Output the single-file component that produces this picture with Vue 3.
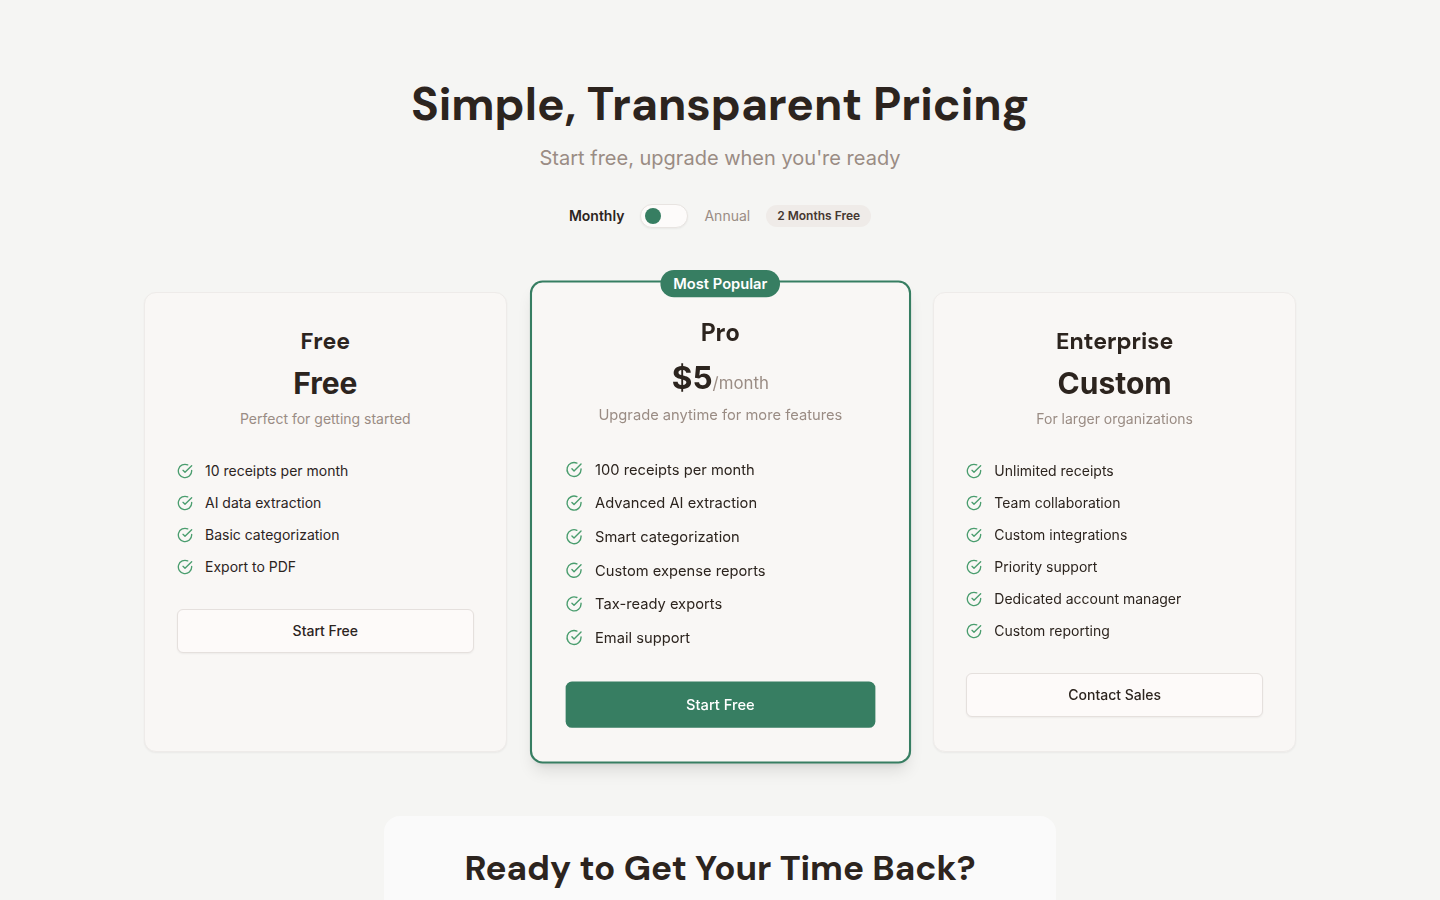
<script setup>
import { ref } from 'vue'

const annual = ref(false)

const plans = [
  {
    name: 'Free',
    price: 'Free',
    desc: 'Perfect for getting started',
    features: ['10 receipts per month', 'AI data extraction', 'Basic categorization', 'Export to PDF'],
    cta: 'Start Free',
  },
  {
    name: 'Pro',
    price: '$5',
    period: '/month',
    desc: 'Upgrade anytime for more features',
    features: [
      '100 receipts per month',
      'Advanced AI extraction',
      'Smart categorization',
      'Custom expense reports',
      'Tax-ready exports',
      'Email support',
    ],
    cta: 'Start Free',
    popular: true,
  },
  {
    name: 'Enterprise',
    price: 'Custom',
    desc: 'For larger organizations',
    features: [
      'Unlimited receipts',
      'Team collaboration',
      'Custom integrations',
      'Priority support',
      'Dedicated account manager',
      'Custom reporting',
    ],
    cta: 'Contact Sales',
  },
]
</script>

<template>
  <main class="pricing-page">
    <header class="intro">
      <h1>Simple, Transparent Pricing</h1>
      <p>Start free, upgrade when you're ready</p>
    </header>

    <div class="billing">
      <label for="billing-switch" :class="['billing-label', { active: !annual }]">Monthly</label>
      <input id="billing-switch" v-model="annual" class="switch" type="checkbox" role="switch">
      <label for="billing-switch" :class="['billing-label', { active: annual }]">Annual</label>
      <span class="saving">2 Months Free</span>
    </div>

    <section class="plans">
      <article v-for="plan in plans" :key="plan.name" :class="['plan', { popular: plan.popular }]">
        <span v-if="plan.popular" class="popular-badge">Most Popular</span>
        <div class="plan-header">
          <h3>{{ plan.name }}</h3>
          <div class="price">{{ plan.price }}<span v-if="plan.period" class="period">{{ plan.period }}</span></div>
          <p class="desc">{{ plan.desc }}</p>
        </div>
        <ul class="features">
          <li v-for="f in plan.features" :key="f">
            <svg class="check" viewBox="0 0 24 24" aria-hidden="true">
              <path d="M22 11.08V12a10 10 0 1 1-5.93-9.14" />
              <path d="m9 11 3 3L22 4" />
            </svg>
            <span>{{ f }}</span>
          </li>
        </ul>
        <button type="button" class="plan-button">{{ plan.cta }}</button>
      </article>
    </section>

    <section class="closing">
      <h2>Ready to Get Your Time Back?</h2>
    </section>
  </main>
</template>

<style>
body {
  background: #f5f5f3;
}
</style>

<style scoped>
.pricing-page {
  box-sizing: border-box;
  max-width: 1200px;
  margin: 0 auto;
  padding: 80px 24px;
  font-family: Inter, "Liberation Sans", sans-serif;
  color: #2c241e;
}

h1,
h2,
h3,
p {
  margin: 0;
}

h1,
h2,
h3 {
  font-family: "DM Sans", Inter, sans-serif;
}

.intro {
  text-align: center;
}

.intro h1 {
  font-size: 46px;
  line-height: 48px;
  font-weight: 700;
}

.intro p {
  margin-top: 16px;
  font-size: 20px;
  line-height: 28px;
  color: #9a8c84;
}

.billing {
  display: flex;
  flex-wrap: wrap;
  align-items: center;
  justify-content: center;
  gap: 16px;
  margin-top: 32px;
}

.billing-label {
  font-size: 14px;
  line-height: 20px;
  color: #9a8c84;
  cursor: pointer;
}

.billing-label.active {
  font-weight: 600;
  color: #2c241e;
}

.switch {
  appearance: none;
  box-sizing: border-box;
  display: flex;
  align-items: center;
  width: 48px;
  height: 24px;
  margin: 0;
  padding: 0 4px;
  border: 1px solid #e8e4e1;
  border-radius: 12px;
  background: #fdfbfa;
  box-shadow: 0 1px 2px rgba(0, 0, 0, 0.05);
  cursor: pointer;
}

.switch::before {
  content: "";
  width: 16px;
  height: 16px;
  border-radius: 50%;
  background: #377e62;
}

.switch:checked {
  justify-content: flex-end;
}

.saving {
  padding: 3px 11px;
  border-radius: 11px;
  background: #efebe8;
  font-size: 12px;
  line-height: 16px;
  font-weight: 600;
  color: #453730;
}

.plans {
  display: grid;
  grid-template-columns: repeat(3, minmax(0, 1fr));
  gap: 32px;
  margin-top: 64px;
}

.plan {
  position: relative;
  display: flex;
  flex-direction: column;
  padding: 32px;
  border: 1px solid #eeebe9;
  border-radius: 12px;
  background: #f9f7f5;
  box-shadow: 0 1px 2px rgba(0, 0, 0, 0.05);
}

.plan.popular {
  border: 2px solid #377e62;
  box-shadow: 0 10px 15px -3px rgba(0, 0, 0, 0.1), 0 4px 6px -4px rgba(0, 0, 0, 0.1);
  transform: scale(1.05);
}

.popular-badge {
  position: absolute;
  top: -12px;
  left: 50%;
  transform: translateX(-50%);
  padding: 3px 12px;
  border-radius: 13px;
  background: #377e62;
  font-size: 14px;
  line-height: 20px;
  font-weight: 600;
  color: #fff;
  white-space: nowrap;
}

.plan-header {
  text-align: center;
}

.plan h3 {
  font-size: 23px;
  line-height: 32px;
  font-weight: 700;
}

.price {
  margin-top: 8px;
  font-size: 30px;
  line-height: 36px;
  font-weight: 700;
}

.period {
  font-size: 16px;
  line-height: 24px;
  font-weight: 400;
  color: #9a8c84;
}

.desc {
  margin-top: 8px;
  font-size: 14px;
  line-height: 20px;
  color: #9a8c84;
}

.features {
  display: flex;
  flex-direction: column;
  gap: 12px;
  margin: 32px 0;
  padding: 0;
  list-style: none;
  font-size: 14px;
  line-height: 20px;
}

.features li {
  display: flex;
  align-items: center;
  gap: 12px;
}

.check {
  flex: none;
  width: 16px;
  height: 16px;
  fill: none;
  stroke: #4a9d6e;
  stroke-width: 2;
  stroke-linecap: round;
  stroke-linejoin: round;
}

.plan-button {
  height: 44px;
  padding: 0 32px;
  border: 1px solid #e5e0dd;
  border-radius: 6px;
  background: #fdfaf9;
  box-shadow: 0 1px 2px rgba(0, 0, 0, 0.05);
  font: 500 14px/20px Inter, sans-serif;
  color: #2c241e;
  cursor: pointer;
}

.popular .plan-button {
  border: none;
  background: #377e62;
  box-shadow: none;
  color: #fff;
}

.closing {
  max-width: 608px;
  margin: 64px auto 0;
  padding: 32px;
  border-radius: 16px;
  background: #fafafa;
  text-align: center;
}

.closing h2 {
  font-size: 35px;
  line-height: 40px;
  font-weight: 700;
}

@media (max-width: 900px) {
  .plans {
    grid-template-columns: minmax(0, 1fr);
  }

  .plan.popular {
    transform: none;
  }
}
</style>
